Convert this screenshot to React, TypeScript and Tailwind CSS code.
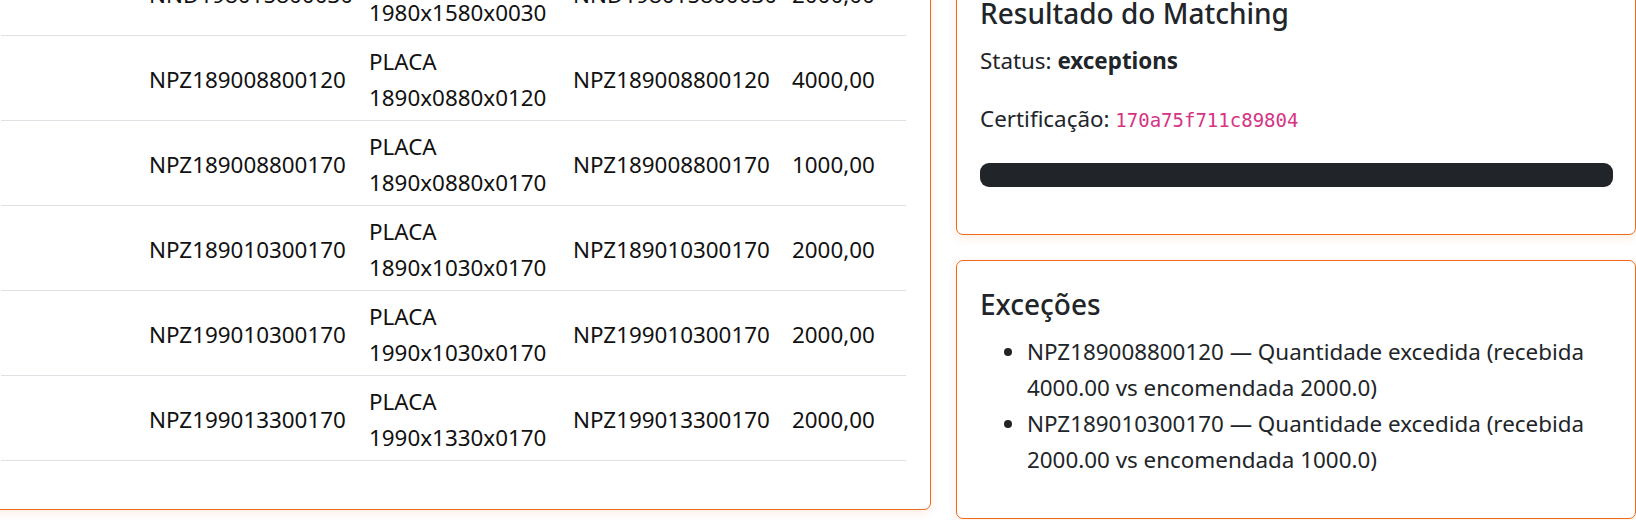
const rows = [
  { code: "NND198015800030", desc: "PLACA 1980x1580x0030", qty: "2000,00" },
  { code: "NPZ189008800120", desc: "PLACA 1890x0880x0120", qty: "4000,00" },
  { code: "NPZ189008800170", desc: "PLACA 1890x0880x0170", qty: "1000,00" },
  { code: "NPZ189010300170", desc: "PLACA 1890x1030x0170", qty: "2000,00" },
  { code: "NPZ199010300170", desc: "PLACA 1990x1030x0170", qty: "2000,00" },
  { code: "NPZ199013300170", desc: "PLACA 1990x1330x0170", qty: "2000,00" },
];

const exceptions = [
  "NPZ189008800120 — Quantidade excedida (recebida 4000.00 vs encomendada 2000.0)",
  "NPZ189010300170 — Quantidade excedida (recebida 2000.00 vs encomendada 1000.0)",
];

const App = () => {
  return (
    <div className="flex h-[520px] w-[1636px] gap-[25px] overflow-hidden bg-white font-['Noto_Sans',sans-serif] text-[22.4px] leading-[36px]">
      {/* linhas da guia de remessa */}
      <div className="w-[931px] flex-none">
        <div className="-ml-[24px] -mt-[61px] rounded-[7px] border border-[#ee6a1a] bg-white px-[24px] pt-[11px] pb-[24px] shadow-[0_3px_10px_rgba(238,106,26,0.12)]">
          <div className="mb-[24px] text-[#111]">
            {rows.map((row) => (
              <div
                key={row.code}
                className="grid grid-cols-[138px_220px_204px_219px_125px] items-center border-b border-[#dee2e6]"
              >
                <div className="px-[10px] pt-[8px] pb-[4px]"></div>
                <div className="px-[10px] pt-[8px] pb-[4px]">{row.code}</div>
                <div className="px-[10px] pt-[8px] pb-[4px]">{row.desc}</div>
                <div className="pl-[10px] pr-[4px] pt-[8px] pb-[4px]">{row.code}</div>
                <div className="pl-[10px] pr-[33px] pt-[8px] pb-[4px] text-right">{row.qty}</div>
              </div>
            ))}
          </div>
        </div>
      </div>

      <div className="flex w-[680px] flex-none flex-col gap-[25px] text-[#212529]">
        <div className="-mt-[36px] rounded-[7px] border border-[#ee6a1a] bg-white pt-[31px] pl-[23px] pr-[22px] pb-[47px] shadow-[0_3px_10px_rgba(238,106,26,0.12)]">
          <h5 className="text-[28px] font-medium leading-[34px]">Resultado do Matching</h5>
          <p className="mt-[13px]">
            Status: <strong className="font-bold">exceptions</strong>
          </p>
          <p className="mt-[22px]">
            Certificação:{" "}
            <code className="font-['DejaVu_Sans_Mono',monospace] text-[19px] text-[#d63384]">170a75f711c89804</code>
          </p>
          <div className="mt-[25px] h-[24px] rounded-[9px] bg-[#212529]"></div>
        </div>

        <div className="rounded-[7px] border border-[#ee6a1a] bg-white pt-[26px] pl-[23px] pr-[22px] pb-[40px] shadow-[0_3px_10px_rgba(238,106,26,0.12)]">
          <h5 className="text-[28px] font-medium leading-[34px]">Exceções</h5>
          <ul className="mt-[13px] list-disc pl-[47px]">
            {exceptions.map((item) => (
              <li key={item}>{item}</li>
            ))}
          </ul>
        </div>
      </div>
    </div>
  );
};

export default App;
